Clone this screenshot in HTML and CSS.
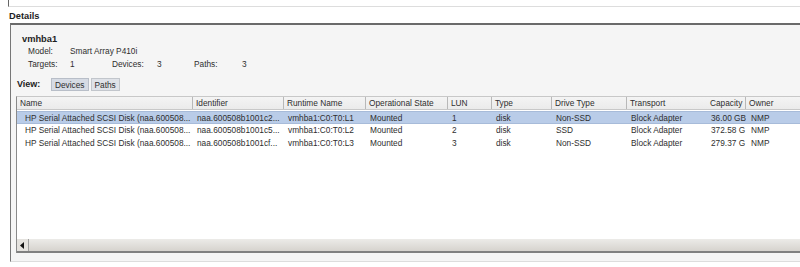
FILE: index.html
```html
<!DOCTYPE html>
<html>
<head>
<meta charset="utf-8">
<link rel="stylesheet" href="styles.css">
</head>
<body>
<div class="topline"></div>
<div class="title">Details</div>
<div class="panel">
  <div class="info">
    <div class="hba">vmhba1</div>
    <div class="kv"><span class="k">Model:</span><span class="v">Smart Array P410i</span></div>
    <div class="kv"><span class="k">Targets:</span><span class="v short">1</span><span class="k2">Devices:</span><span class="v short2">3</span><span class="k3">Paths:</span><span class="v">3</span></div>
  </div>
  <div class="view">
    <span class="viewlabel">View:</span>
    <span class="btn active">Devices</span>
    <span class="btn">Paths</span>
  </div>
  <div class="table">
    <div class="row head">
      <div class="c c1">Name</div>
      <div class="c c2">Identifier</div>
      <div class="c c3">Runtime Name</div>
      <div class="c c4">Operational State</div>
      <div class="c c5">LUN</div>
      <div class="c c6">Type</div>
      <div class="c c7">Drive Type</div>
      <div class="c c8">Transport</div>
      <div class="c c9">Capacity</div>
      <div class="c c10">Owner</div>
    </div>
    <div class="row sel">
      <div class="c c1 ind">HP Serial Attached SCSI Disk (naa.600508...</div>
      <div class="c c2">naa.600508b1001c2...</div>
      <div class="c c3">vmhba1:C0:T0:L1</div>
      <div class="c c4">Mounted</div>
      <div class="c c5">1</div>
      <div class="c c6">disk</div>
      <div class="c c7">Non-SSD</div>
      <div class="c c8">Block Adapter</div>
      <div class="c c9">36.00 GB</div>
      <div class="c c10">NMP</div>
    </div>
    <div class="row">
      <div class="c c1 ind">HP Serial Attached SCSI Disk (naa.600508...</div>
      <div class="c c2">naa.600508b1001c5...</div>
      <div class="c c3">vmhba1:C0:T0:L2</div>
      <div class="c c4">Mounted</div>
      <div class="c c5">2</div>
      <div class="c c6">disk</div>
      <div class="c c7">SSD</div>
      <div class="c c8">Block Adapter</div>
      <div class="c c9">372.58 G</div>
      <div class="c c10">NMP</div>
    </div>
    <div class="row">
      <div class="c c1 ind">HP Serial Attached SCSI Disk (naa.600508...</div>
      <div class="c c2">naa.600508b1001cf...</div>
      <div class="c c3">vmhba1:C0:T0:L3</div>
      <div class="c c4">Mounted</div>
      <div class="c c5">3</div>
      <div class="c c6">disk</div>
      <div class="c c7">Non-SSD</div>
      <div class="c c8">Block Adapter</div>
      <div class="c c9">279.37 G</div>
      <div class="c c10">NMP</div>
    </div>
    <div class="spacer"></div>
    <div class="hscroll">
      <div class="arrow"><svg width="5" height="7" viewBox="0 0 5 7"><path d="M4 0 L0 3.5 L4 7 Z" fill="#111"/></svg></div>
      <div class="track"></div>
    </div>
  </div>
</div>
</body>
</html>
```
FILE: styles.css
```css
html, body {
  margin: 0;
  padding: 0;
  background: #fff;
  overflow: hidden;
}
body {
  font-family: "Liberation Sans", Arial, sans-serif;
  font-size: 8.3px;
  color: #2e2e2e;
  width: 800px;
  height: 267px;
}
.topline {
  margin-left: 8px;
  height: 6px;
  border-left: 1px solid #666;
  border-bottom: 1px solid #ddd;
}
.title {
  font-weight: bold;
  font-size: 9.3px;
  color: #1e1e1e;
  padding-left: 9px;
  height: 16px;
  line-height: 18px;
}
.panel {
  margin-left: 10px;
  border-top: 2px solid #6a6a6a;
  border-left: 1px solid #777;
  border-bottom: 1px solid #ddd;
  background: #f5f5f5;
  height: 236px;
  display: flex;
  flex-direction: column;
}
.info {
  padding: 8px 0 0 11px;
}
.hba {
  font-weight: bold;
  font-size: 9.3px;
  color: #1e1e1e;
  height: 12px;
  line-height: 12px;
}
.kv {
  display: flex;
  height: 12.5px;
  line-height: 12.5px;
  padding-left: 6px;
}
.k { width: 42px; }
.v.short { width: 42px; }
.k2 { width: 45px; }
.v.short2 { width: 37px; }
.k3 { width: 48px; }
.view {
  display: flex;
  align-items: center;
  gap: 2px;
  padding: 7px 0 0 6px;
  height: 14px;
}
.viewlabel {
  font-weight: bold;
  font-size: 9px;
  color: #1e1e1e;
  width: 32px;
}
.btn {
  height: 13px;
  line-height: 12px;
  padding: 0 3px;
  background: #dfe2e8;
  border: 1px solid #c2c6cc;
  box-sizing: border-box;
}
.btn.active {
  background: #d6dbe4;
  border-color: #b8bec8;
}
.table {
  margin: 5px 0 0 5px;
  flex: 1;
  background: #fff;
  border-left: 1px solid #8a8a8a;
  border-top: 1px solid #c8c8c8;
  display: flex;
  flex-direction: column;
  margin-bottom: 8px;
}
.row {
  display: grid;
  grid-template-columns: 176px 91px 82px 82px 44px 60px 75px 80px 39px 1fr;
  height: 12.5px;
  line-height: 12.5px;
  white-space: nowrap;
}
.row.head {
  height: 12px;
  line-height: 12px;
  background: linear-gradient(#f4f4f4, #ebebeb);
  border-bottom: 1px solid #c8c8c8;
  margin-bottom: 1px;
}
.head .c {
  border-right: 1px solid #b8b8b8;
  padding-left: 3px;
}
.head .c8 { border-right: none; }
.head .c9 { text-align: right; padding-right: 4px; }
.head .c10 { border-right: none; }
.c {
  overflow: hidden;
  padding-left: 4px;
  box-sizing: border-box;
}
.c.ind { padding-left: 8px; }
.c9 { text-align: right; padding-right: 5px; }
.c10 { padding-left: 5px; }
.row.sel {
  background: #b9cce8;
  border-top: 1px solid #a7bbd9;
  border-bottom: 1px solid #a7bbd9;
  box-sizing: border-box;
  height: 13px;
}
.spacer { flex: 1; }
.hscroll {
  display: flex;
  height: 12px;
  background: linear-gradient(#ecebe8, #d6d3ce);
  border-bottom: 2px solid #808080;
}
.arrow {
  width: 11px;
  border-right: 1px solid #a0a0a0;
  display: flex;
  align-items: center;
  justify-content: center;
  background: #e4e2de;
}
.track { flex: 1; }
```
